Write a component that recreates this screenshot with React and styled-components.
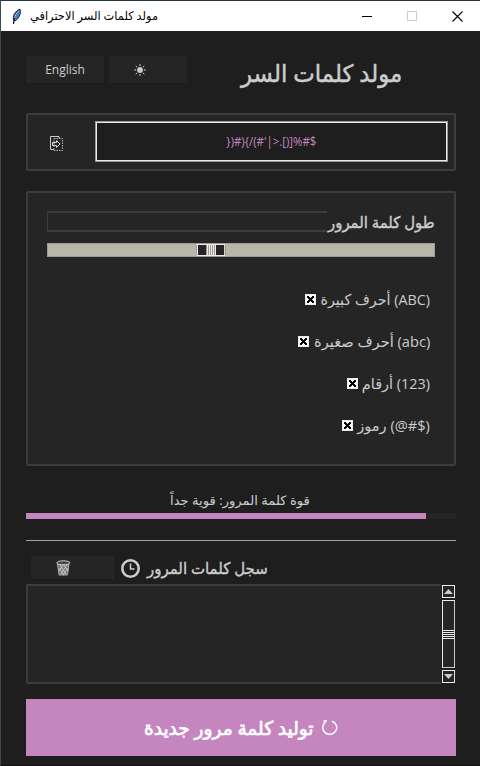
import React from "react";
import styled, { createGlobalStyle } from "styled-components";

const Global = createGlobalStyle`
  * { box-sizing: border-box; }
  html, body { margin: 0; background: #1e1e1e; }
`;

const Window = styled.div`
  width: 480px;
  height: 766px;
  overflow: hidden;
  background: #1e1e1e;
  border-top: 1px solid #26363f;
  border-bottom: 1px solid #151113;
  border-left: 1px solid #3c4a50;
  color: #cccccc;
  font-family: "Open Sans", "DejaVu Sans", sans-serif;
`;

const TitleBar = styled.header`
  height: 30px;
  background: #ffffff;
  color: #000000;
  display: flex;
  align-items: center;
  padding-left: 9px;
`;

const Caption = styled.div`
  width: 130px;
  margin-left: 8px;
  flex: none;
`;

const WindowButtons = styled.div`
  margin-left: auto;
  display: flex;
`;

const WindowButton = styled.div`
  width: 45px;
  height: 30px;
  padding-right: 1px;
  display: grid;
  place-items: center;
`;

const Content = styled.main`
  padding: 25px 24px 0 25px;
`;

const Fit = styled.span`
  display: block;
  flex: none;
  width: max-content;
  white-space: nowrap;
  direction: rtl;
  font-size: ${(p) => p.$size}px;
  -webkit-text-stroke: ${(p) => p.$stroke || 0}px currentColor;
  line-height: 20px;
  transform: scaleX(${(p) => p.$scale || 1});
  transform-origin: ${(p) => p.$origin || "left"} center;
`;

const Top = styled.div`
  display: flex;
  gap: 5px;
  height: 27px;
`;

const FlatButton = styled.div`
  width: ${(p) => p.$width}px;
  height: ${(p) => p.$height}px;
  padding-right: ${(p) => p.$inset || 0}px;
  background: #252525;
  display: grid;
  place-items: center;
  font-size: 12px;
`;

const Heading = styled.div`
  margin-left: 49px;
  padding-top: 7px;
`;

const Panel = styled.section`
  border: 2px solid #3c3c3c;
  border-radius: 2px;
  background: #252525;
  height: ${(p) => p.$height}px;
`;

const PasswordPanel = styled(Panel)`
  margin-top: 30px;
  display: flex;
  align-items: center;
  padding: 3px 6px 0 22px;
`;

const Entry = styled.div`
  width: 353px;
  height: 41px;
  margin: -4px 0 0 auto;
  border: 1px solid #9e9a91;
  box-shadow: inset 0 0 0 1px #eeebe7;
  background: #1e1e1e;
  color: #c586c0;
  display: grid;
  place-items: center;
`;

const SettingsPanel = styled(Panel)`
  margin-top: 20px;
  padding: 18px 19px;
`;

const LengthRow = styled.div`
  display: flex;
  height: 21px;
`;

const LengthFrame = styled.div`
  width: 280px;
  border: solid #3c3c3c;
  border-width: 2px 0 2px 1px;
`;

const LengthLabel = styled.div`
  width: 108px;
  padding-top: 1px;
  display: flex;
  justify-content: flex-end;
`;

const Slider = styled.div`
  margin-top: 11px;
  height: 14px;
  padding-left: 148px;
  border: 1px solid #9e9a91;
  background: #bab5ab;
`;

const Thumb = styled.div`
  width: 30px;
  height: 12px;
  display: flex;
  background: #252525;
  border: 1px solid #eeebe7;
  border-left-color: #9e9a91;
  border-right-color: #9e9a91;
  box-shadow: inset 1px 0 #eeebe7, inset -1px 0 #d8d4cc;
  justify-content: center;
`;

const Grip = styled.div`
  width: 10px;
  background: repeating-linear-gradient(90deg, #9e9a91 0 1px, #eeebe7 1px 2px);
`;

const Options = styled.div`
  padding: 22px 5px 0 0;
`;

const Option = styled.div`
  height: 42px;
  display: flex;
  align-items: center;
  justify-content: flex-end;
  gap: 4px;
`;

const OptionText = styled.div`
  width: ${(p) => p.$width}px;
  margin-top: -2px;
  display: flex;
  justify-content: flex-end;
`;

const OptionCheck = styled.svg`
  flex: none;
  margin-top: -1px;
`;

const Strength = styled.div`
  height: 47px;
  padding: 24px 0 0 144px;
`;

const Meter = styled.div`
  height: 6px;
  background: #252525;
`;

const MeterFill = styled.div`
  width: 400px;
  height: 6px;
  background: #c586c0;
`;

const Rule = styled.div`
  height: 1px;
  margin-top: 21px;
  background: #a5a29d;
`;

const HistoryHeader = styled.div`
  margin: 15px 0 5px 5px;
  height: 23px;
  display: flex;
  align-items: center;
`;

const ClockIcon = styled.svg`
  margin: 2px 7px 0 6px;
`;

const History = styled.div`
  height: 100px;
  display: flex;
  border: 2px solid #3c3c3c;
  border-right: 0;
  border-radius: 2px 0 0 2px;
  background: #252525;
`;

const ScrollTrack = styled.div`
  width: 15px;
  height: 100px;
  margin: -2px 0 0 auto;
  padding: 1px;
  background: #1e1e1e;
  display: flex;
  flex-direction: column;
  gap: 2px;
`;

const Arrow = styled.div`
  width: 13px;
  height: 13px;
  border: 1px solid #eeebe7;
  background: #252525;
  display: grid;
  place-items: center;
`;

const ScrollThumb = styled.div`
  width: 13px;
  height: 68px;
  border: 1px solid #eeebe7;
  border-color: #eeebe7 #cfcbc4 #cfcbc4 #eeebe7;
  background: #252525;
  display: flex;
  align-items: center;
`;

const ScrollGrip = styled.div`
  width: 11px;
  height: 9px;
  background: repeating-linear-gradient(#eeebe7 0 1px, #252525 1px 2px);
`;

const Generate = styled.div`
  margin-top: 15px;
  height: 57px;
  background: #c586c0;
  color: #ffffff;
  display: flex;
  align-items: center;
  padding-left: 118px;
`;

const GenerateText = styled.div`
  width: 171px;
  margin-right: 6px;
`;

const options = [
  { tag: "(ABC)", name: "أحرف كبيرة", width: 110, scale: 0.953 },
  { tag: "(abc)", name: "أحرف صغيرة", width: 117, scale: 0.975 },
  { tag: "(123)", name: "أرقام", width: 68, scale: 0.96 },
  { tag: "(@#$)", name: "رموز", width: 73, scale: 0.97 },
];

const Feather = () => (
  <svg width="12" height="17" viewBox="0 0 12 17">
    <path d="M3.500 12C2.500 8 5 3 10 1c1 3 0 7-2.500 10l-2.500 2z" fill="#4a82c8" stroke="#18283c" />
    <path d="M8 3Q4 8 3.500 16" fill="none" stroke="#111" strokeWidth="1.200" />
    <path d="M8.500 3Q5.500 6 4.500 10" fill="none" stroke="#a8cff5" />
  </svg>
);

const Check = () => (
  <OptionCheck width="11" height="11" viewBox="0 0 11 11" shapeRendering="crispEdges">
    <path d="M0 0h11v11H0z" fill="#eeebe7" />
    <path d="M1 1h9v9H1z" fill="#fff" />
    <path d="M2 2h2v1h1v1h1V3h1V2h2v2H8v1H7v1h1v1h1v2H7V8H6V7H5v1H4v1H2V7h1V6h1V5H3V4H2z" fill="#000" />
  </OptionCheck>
);

const Sun = () => (
  <svg width="12" height="12" viewBox="0 0 12 12">
    <circle cx="6" cy="6" r="2.900" fill="#ccc" />
    <path d="M6 0v2M6 10v2M.2 6h2M9.800 6h2M1.700 1.700l1.500 1.500M8.800 8.800l1.500 1.500M10.300 1.700L8.800 3.200M3.200 8.800L1.700 10.300" stroke="#ccc" />
  </svg>
);

const Copy = () => (
  <svg width="14" height="16" viewBox="0 0 14 16" fill="none">
    <path d="M9 2.500V.5H.5v13H4" stroke="#b9d5dc" />
    <path d="M4 2.500h8.500v12H4z" stroke="#b9b3ab" strokeDasharray="1.500 1" />
    <path d="M2.500 6.500h4v-2l3.500 3.500-3.500 3.500v-2h-4z" stroke="#ddd9c8" />
  </svg>
);

const Trash = () => (
  <svg width="15" height="16" viewBox="0 0 15 16" fill="none">
    <path d="M1.500 4l1.500 11h8.500L13 4z" fill="#777" stroke="#aaa" />
    <path d="M4 5l6 9M7 4l5 7M3 8l5 7M11 5l-6 9M8 4l-5 7M12 8l-5 7" stroke="#ddd" strokeWidth=".7" />
    <ellipse cx="7.300" cy="2.800" rx="6.500" ry="2" fill="#444" stroke="#ccc" />
  </svg>
);

export default function App() {
  return (
    <>
      <Global />
      <Window>
        <TitleBar>
          <Feather />
          <Caption><Fit $size={12} $scale={0.95}>مولد كلمات السر الاحترافي</Fit></Caption>
          <WindowButtons>
            <WindowButton><svg width="10" height="10"><path d="M0 5.500h10" stroke="#000" /></svg></WindowButton>
            <WindowButton><svg width="10" height="10"><path d="M.5.5h9v9h-9z" fill="none" stroke="#ccc" /></svg></WindowButton>
            <WindowButton><svg width="11" height="11"><path d="M.5.5l10 10M10.500.5l-10 10" stroke="#000" strokeWidth="1.100" /></svg></WindowButton>
          </WindowButtons>
        </TitleBar>
        <Content>
          <Top>
            <FlatButton $width={78} $height={27}>English</FlatButton>
            <FlatButton $width={78} $height={27} $inset={16}><Sun /></FlatButton>
            <Heading><Fit $size={24} $scale={0.952} $stroke={0.5}>مولد كلمات السر</Fit></Heading>
          </Top>
          <PasswordPanel $height={58}>
            <Copy />
            <Entry><Fit $size={12} $scale={0.95} $origin="center"><bdo dir="ltr">{"})#){/(#'|>.[)]%#$"}</bdo></Fit></Entry>
          </PasswordPanel>
          <SettingsPanel $height={275}>
            <LengthRow>
              <LengthFrame />
              <LengthLabel><Fit $size={16} $scale={0.93} $stroke={0.4} $origin="right">طول كلمة المرور</Fit></LengthLabel>
            </LengthRow>
            <Slider><Thumb><Grip /></Thumb></Slider>
            <Options>
              {options.map((o) => (
                <Option key={o.tag}>
                  <Check />
                  <OptionText $width={o.width}>
                    <Fit $size={15} $scale={o.scale} $origin="right"><bdo dir="ltr">{o.tag}</bdo> {o.name}</Fit>
                  </OptionText>
                </Option>
              ))}
            </Options>
          </SettingsPanel>
          <Strength><Fit $size={13} $scale={1.01}>قوة كلمة المرور: قوية جداً</Fit></Strength>
          <Meter><MeterFill /></Meter>
          <Rule />
          <HistoryHeader>
            <FlatButton $width={83} $height={23} $inset={19}><Trash /></FlatButton>
            <ClockIcon width="20" height="20" viewBox="0 0 20 20" fill="none" stroke="#ccc">
              <circle cx="10.500" cy="9.500" r="8.200" strokeWidth="2.600" />
              <path d="M10.500 4.500V10h4" strokeWidth="1.500" />
            </ClockIcon>
            <Fit $size={16} $scale={0.935} $stroke={0.4}>سجل كلمات المرور</Fit>
          </HistoryHeader>
          <History>
            <ScrollTrack>
              <Arrow><svg width="9" height="5"><path d="M0 5L4.500 0L9 5z" fill="#ccc" /></svg></Arrow>
              <ScrollThumb><ScrollGrip /></ScrollThumb>
              <Arrow><svg width="9" height="5"><path d="M0 0L4.500 5L9 0z" fill="#ccc" /></svg></Arrow>
            </ScrollTrack>
          </History>
          <Generate>
            <GenerateText><Fit $size={19} $scale={0.975} $stroke={0.7}>توليد كلمة مرور جديدة</Fit></GenerateText>
            <svg width="17" height="17" viewBox="0 0 17 17" fill="none" stroke="#fff" strokeWidth="1.500">
              <path d="M11 2.200a7 6.700 0 1 1-6.500 1M2.500 2H6" />
            </svg>
          </Generate>
        </Content>
      </Window>
    </>
  );
}
